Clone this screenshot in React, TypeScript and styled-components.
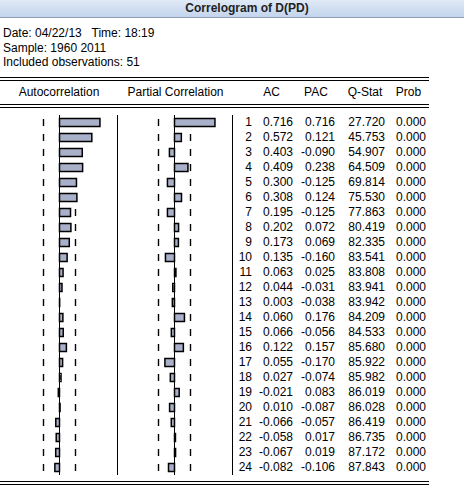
import React from "react";
import styled, { createGlobalStyle } from "styled-components";

const GlobalStyle = createGlobalStyle`
  html, body {
    margin: 0;
    padding: 0;
    background: #fff;
  }
  body {
    font-family: "Liberation Sans", Arial, sans-serif;
    font-size: 12px;
    color: #000;
  }
`;

// lag, ac, pac, q-stat, prob
const rows: [number, number, number, string, string][] = [
  [1, 0.716, 0.716, "27.720", "0.000"],
  [2, 0.572, 0.121, "45.753", "0.000"],
  [3, 0.403, -0.09, "54.907", "0.000"],
  [4, 0.409, 0.238, "64.509", "0.000"],
  [5, 0.3, -0.125, "69.814", "0.000"],
  [6, 0.308, 0.124, "75.530", "0.000"],
  [7, 0.195, -0.125, "77.863", "0.000"],
  [8, 0.202, 0.072, "80.419", "0.000"],
  [9, 0.173, 0.069, "82.335", "0.000"],
  [10, 0.135, -0.16, "83.541", "0.000"],
  [11, 0.063, 0.025, "83.808", "0.000"],
  [12, 0.044, -0.031, "83.941", "0.000"],
  [13, 0.003, -0.038, "83.942", "0.000"],
  [14, 0.06, 0.176, "84.209", "0.000"],
  [15, 0.066, -0.056, "84.533", "0.000"],
  [16, 0.122, 0.157, "85.680", "0.000"],
  [17, 0.055, -0.17, "85.922", "0.000"],
  [18, 0.027, -0.074, "85.982", "0.000"],
  [19, -0.021, 0.083, "86.019", "0.000"],
  [20, 0.01, -0.087, "86.028", "0.000"],
  [21, -0.066, -0.057, "86.419", "0.000"],
  [22, -0.058, 0.017, "86.735", "0.000"],
  [23, -0.067, 0.019, "87.172", "0.000"],
  [24, -0.082, -0.106, "87.843", "0.000"],
];

const ROW_H = 15;
const SCALE = 56.5;
const BOUND = 16; // 2/sqrt(51) in pixels

const Window = styled.div`
  width: 464px;
  height: 500px;
  overflow: hidden;
`;

const TitleBar = styled.div`
  height: 17px;
  line-height: 16px;
  padding-left: 30px;
  text-align: center;
  font-weight: bold;
  color: #222;
  background: linear-gradient(#e0e9f6, #c3d5ed);
  border-bottom: 1px solid #8d9db2;
`;

const Info = styled.div`
  padding: 8px 3px 7.5px;
  line-height: 14.5px;
`;

const DoubleRule = styled.div`
  width: 429px;
  height: 2px;
  border-top: 1px solid #000;
  border-bottom: 1px solid #000;
`;

const Columns = styled.div`
  display: grid;
  grid-template-columns: 118px 115px 19px 41px 42px 50px 41px;
  width: 429px;
`;

const Head = styled(Columns)`
  height: 23px;
  line-height: 23px;
`;

const HeadCell = styled.div<{ $shift?: number }>`
  text-align: center;
  white-space: nowrap;
  transform: translateX(${(p) => p.$shift ?? 0}px);
`;

const Body = styled(Columns)`
  margin-top: 7px;
  grid-template-rows: repeat(${rows.length}, ${ROW_H}px);
`;

const ChartCell = styled.div`
  grid-row: 1 / -1;
  border-right: 1px solid #000;
`;

const Num = styled.div`
  text-align: right;
  line-height: ${ROW_H}px;
  white-space: nowrap;
`;

const BottomRule = styled(DoubleRule)`
  margin-top: 6px;
`;

function Chart({ values, width, axis }: { values: number[]; width: number; axis: number }) {
  const h = values.length * ROW_H;
  return (
    <svg width={width} height={h} style={{ display: "block" }}>
      {values.map((_, i) => {
        const cy = ROW_H / 2 + i * ROW_H;
        return (
          <g key={"d" + i} stroke="#000" strokeWidth={1.4}>
            <line x1={axis - BOUND} x2={axis - BOUND} y1={cy - 3.5} y2={cy + 3.5} />
            <line x1={axis + BOUND} x2={axis + BOUND} y1={cy - 3.5} y2={cy + 3.5} />
          </g>
        );
      })}
      <line x1={axis} x2={axis} y1={0} y2={h} stroke="#000" strokeWidth={1} />
      {values.map((v, i) => {
        const cy = ROW_H / 2 + i * ROW_H;
        const w = Math.abs(v) * SCALE;
        const x = v >= 0 ? axis : axis - w;
        return (
          <rect
            key={"b" + i}
            x={x}
            y={cy - 4}
            width={w}
            height={8}
            fill="#a9b0c9"
            stroke="#000"
            strokeWidth={1.5}
          />
        );
      })}
    </svg>
  );
}

export default function App() {
  return (
    <Window>
      <GlobalStyle />
      <TitleBar>Correlogram of D(PD)</TitleBar>
      <Info>
        <div>Date: 04/22/13&nbsp;&nbsp; Time: 18:19</div>
        <div>Sample: 1960 2011</div>
        <div>Included observations: 51</div>
      </Info>
      <DoubleRule />
      <Head>
        <HeadCell>Autocorrelation</HeadCell>
        <HeadCell>Partial Correlation</HeadCell>
        <HeadCell />
        <HeadCell $shift={-1}>AC</HeadCell>
        <HeadCell $shift={2}>PAC</HeadCell>
        <HeadCell $shift={5}>Q-Stat</HeadCell>
        <HeadCell $shift={3}>Prob</HeadCell>
      </Head>
      <DoubleRule />
      <Body>
        <ChartCell style={{ gridColumn: 1 }}>
          <Chart values={rows.map((r) => r[1])} width={117} axis={59.5} />
        </ChartCell>
        <ChartCell style={{ gridColumn: 2 }}>
          <Chart values={rows.map((r) => r[2])} width={114} axis={56.5} />
        </ChartCell>
        {rows.map((r) => (
          <React.Fragment key={r[0]}>
            <Num>{r[0]}</Num>
            <Num>{r[1].toFixed(3)}</Num>
            <Num>{r[2].toFixed(3)}</Num>
            <Num>{r[3]}</Num>
            <Num>{r[4]}</Num>
          </React.Fragment>
        ))}
      </Body>
      <BottomRule />
    </Window>
  );
}
